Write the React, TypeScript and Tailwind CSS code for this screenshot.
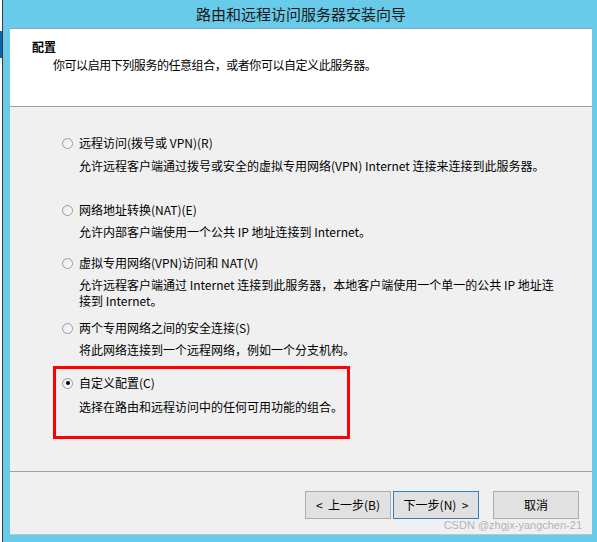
import * as React from "react";

const cjk = { fontFamily: '"Noto Sans CJK SC", "Noto Sans", sans-serif' };

function Radio({ checked }: { checked?: boolean }) {
  return (
    <span className="flex h-[11px] w-[11px] shrink-0 items-center justify-center rounded-full border border-[#9a9a9a] bg-gradient-to-br from-[#e6e6e6] to-white">
      {checked && <span className="h-[4px] w-[4px] rounded-full bg-black" />}
    </span>
  );
}

function Option({
  label,
  desc,
  checked,
  descGap = "mt-[6px]",
}: {
  label: string;
  desc: string[];
  checked?: boolean;
  descGap?: string;
}) {
  return (
    <div>
      <div className="flex h-[16px] items-center gap-[6px]">
        <Radio checked={checked} />
        <span className="leading-[16px]">{label}</span>
      </div>
      <div className={`${descGap} pl-[17px]`}>
        {desc.map((d) => (
          <div key={d} className="leading-[16px]">
            {d}
          </div>
        ))}
      </div>
    </div>
  );
}

function WizardButton({ children, primary }: { children: React.ReactNode; primary?: boolean }) {
  return (
    <button
      className={`flex h-[28px] w-[86px] items-center justify-center border bg-[#e1e1e1] text-[12px] text-black ${
        primary ? "border-[#2f7fc1]" : "border-[#adadad]"
      }`}
    >
      {children}
    </button>
  );
}

export default function App() {
  return (
    <div className="flex h-[542px] w-[597px] bg-white text-[12px] text-black" style={cjk}>
      {/* left screen edge */}
      <div className="flex w-[2px] flex-col">
        <div className="h-[31px]" />
        <div className="h-[27px] bg-[#0c64a8]" />
      </div>
      <div className="w-px bg-[#3a3a3a]" />

      {/* dialog frame */}
      <div className="flex flex-1 flex-col bg-[#67cbe9]">
        <div className="flex h-[28px] items-center pl-[193px] text-[15px] text-[#1a1a1a]">
          路由和远程访问服务器安装向导
        </div>

        <div className="mb-[7px] ml-[7px] mr-[5px] flex flex-1 flex-col border-t border-b border-t-[#8aa7b6] border-b-[#c4c4c4] bg-[#f0f0f0]">
          {/* header */}
          <div className="h-[78px] border-b border-[#a0a0a0] bg-white pl-[22px] pt-[10px]">
            <div className="font-bold leading-[16px]">配置</div>
            <div className="mt-[2px] pl-[21px] leading-[16px] tracking-[-0.45px]">
              你可以启用下列服务的任意组合，或者你可以自定义此服务器。
            </div>
          </div>

          {/* options */}
          <div className="h-[365px] border-b border-[#a0a0a0] pl-[52px] pt-[28px]">
            <Option
              label="远程访问(拨号或 VPN)(R)"
              desc={["允许远程客户端通过拨号或安全的虚拟专用网络(VPN) Internet 连接来连接到此服务器。"]}
              descGap="mt-[7px]"
            />
            <div className="mt-[28px]">
              <Option label="网络地址转换(NAT)(E)" desc={["允许内部客户端使用一个公共 IP 地址连接到 Internet。"]} />
            </div>
            <div className="mt-[15px]">
              <Option
                label="虚拟专用网络(VPN)访问和 NAT(V)"
                desc={[
                  "允许远程客户端通过 Internet 连接到此服务器，本地客户端使用一个单一的公共 IP 地址连",
                  "接到 Internet。",
                ]}
              />
            </div>
            <div className="mt-[11px]">
              <Option label="两个专用网络之间的安全连接(S)" desc={["将此网络连接到一个远程网络，例如一个分支机构。"]} />
            </div>
            <div className="ml-[-9px] mt-[8px] w-[297px] border-[3px] border-[#ff0000] pb-[21px] pl-[6px] pt-[6px]">
              <Option
                label="自定义配置(C)"
                desc={["选择在路由和远程访问中的任何可用功能的组合。"]}
                checked
                descGap="mt-[8px]"
              />
            </div>
          </div>

          {/* buttons */}
          <div className="relative flex flex-1 items-start justify-end pr-[13px] pt-[19px]">
            <div className="flex gap-[2px]">
              <WizardButton>&lt;&nbsp;&nbsp;上一步(B)</WizardButton>
              <WizardButton primary>下一步(N)&nbsp;&nbsp;&gt;</WizardButton>
            </div>
            <div className="ml-[14px]">
              <WizardButton>取消</WizardButton>
            </div>
            <div
              className="absolute right-[10px] top-[45px] text-[11px] text-[#b4b4b4]"
              style={{ fontFamily: '"Liberation Sans", Arial, sans-serif' }}
            >
              CSDN @zhgjx-yangchen-21
            </div>
          </div>
        </div>
      </div>
    </div>
  );
}
